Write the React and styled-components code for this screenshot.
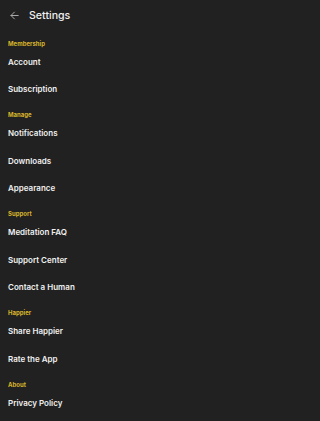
import styled, { createGlobalStyle } from "styled-components";

const GlobalStyle = createGlobalStyle`
    * {
        box-sizing: border-box;
    }
    body {
        margin: 0;
        background-color: #212121;
        font-family: Inter, "Noto Sans", sans-serif;
    }
`;

const sections = [
    { title: "Membership", items: ["Account", "Subscription"] },
    { title: "Manage", items: ["Notifications", "Downloads", "Appearance"] },
    { title: "Support", items: ["Meditation FAQ", "Support Center", "Contact a Human"] },
    { title: "Happier", items: ["Share Happier", "Rate the App"] },
    { title: "About", items: ["Privacy Policy"] },
];

function BackArrow() {
    return (
        <svg width="9" height="9" viewBox="0 0 9 9" fill="none">
            <path
                d="M8.2 4.5H1M4.4 1.1L1 4.5L4.4 7.9"
                stroke="#a8a8a8"
                strokeWidth="1"
                strokeLinecap="round"
                strokeLinejoin="round"
            />
        </svg>
    );
}

export default function App() {
    return (
        <>
            <GlobalStyle />
            <Screen>
                <Header>
                    <BackButton>
                        <BackArrow />
                    </BackButton>
                    <Title>Settings</Title>
                </Header>
                <List>
                    {sections.map((section) => (
                        <Section key={section.title}>
                            <SectionTitle>{section.title}</SectionTitle>
                            {section.items.map((item) => (
                                <Item key={item}>{item}</Item>
                            ))}
                        </Section>
                    ))}
                </List>
            </Screen>
        </>
    );
}

const Screen = styled.div`
    width: 200px;
    height: 421px;
    background-color: #212121;
    overflow: hidden;
`;
const Header = styled.div`
    height: 30px;
    display: flex;
    align-items: center;
    padding-left: 9.5px;
`;
const BackButton = styled.div`
    width: 9px;
    height: 9px;
    display: flex;
    margin-right: 10.5px;
`;
const Title = styled.div`
    color: #f0f0f0;
    font-size: 10.6px;
    font-weight: 500;
`;
const List = styled.div`
    display: flex;
    flex-direction: column;
    padding: 1.5px 8px 0;
`;
const Section = styled.div`
    display: flex;
    flex-direction: column;
    margin-top: 6.5px;
`;
const SectionTitle = styled.div`
    height: 10px;
    display: flex;
    align-items: center;
    color: #d8b62c;
    font-size: 6px;
    font-weight: 700;
`;
const Item = styled.div`
    height: 27.5px;
    display: flex;
    align-items: center;
    color: #f0f0f0;
    font-size: 8px;
    font-weight: 600;
`;
